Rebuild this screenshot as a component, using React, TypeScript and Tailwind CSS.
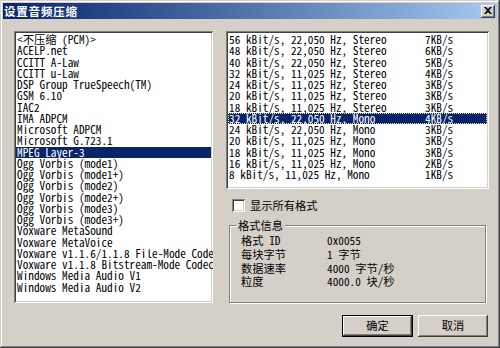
import React from "react";

const leftItems = [
  "<不压缩 (PCM)>",
  "ACELP.net",
  "CCITT A-Law",
  "CCITT u-Law",
  "DSP Group TrueSpeech(TM)",
  "GSM 6.10",
  "IAC2",
  "IMA ADPCM",
  "Microsoft ADPCM",
  "Microsoft G.723.1",
  "MPEG Layer-3",
  "Ogg Vorbis (mode1)",
  "Ogg Vorbis (mode1+)",
  "Ogg Vorbis (mode2)",
  "Ogg Vorbis (mode2+)",
  "Ogg Vorbis (mode3)",
  "Ogg Vorbis (mode3+)",
  "Voxware MetaSound",
  "Voxware MetaVoice",
  "Voxware v1.1.6/1.1.8 File-Mode Codec",
  "Voxware v1.1.8 Bitstream-Mode Codec",
  "Windows Media Audio V1",
  "Windows Media Audio V2",
];

const rightItems: [string, string][] = [
  ["56 kBit/s, 22,050 Hz, Stereo", "7KB/s"],
  ["48 kBit/s, 22,050 Hz, Stereo", "6KB/s"],
  ["40 kBit/s, 22,050 Hz, Stereo", "5KB/s"],
  ["32 kBit/s, 11,025 Hz, Stereo", "4KB/s"],
  ["24 kBit/s, 11,025 Hz, Stereo", "3KB/s"],
  ["20 kBit/s, 11,025 Hz, Stereo", "3KB/s"],
  ["18 kBit/s, 11,025 Hz, Stereo", "3KB/s"],
  ["32 kBit/s, 22,050 Hz, Mono", "4KB/s"],
  ["24 kBit/s, 22,050 Hz, Mono", "3KB/s"],
  ["20 kBit/s, 11,025 Hz, Mono", "3KB/s"],
  ["18 kBit/s, 11,025 Hz, Mono", "3KB/s"],
  ["16 kBit/s, 11,025 Hz, Mono", "2KB/s"],
  ["8 kBit/s, 11,025 Hz, Mono", "1KB/s"],
];

const info: [string, string][] = [
  ["格式 ID", "0x0055"],
  ["每块字节", "1 字节"],
  ["数据速率", "4000 字节/秒"],
  ["粒度", "4000.0 块/秒"],
];

export default function App() {
  return (
    <div className="w-[500px] h-[348px] bg-[#d4d0c8] p-[3px] flex flex-col text-black text-[11.25px] leading-[11.25px] font-['Noto_Sans_Mono_CJK_SC','Liberation_Mono','Noto_Sans_CJK_SC',monospace] shadow-[inset_-1px_-1px_0_#404040,inset_1px_1px_0_#d4d0c8,inset_-2px_-2px_0_#808080,inset_2px_2px_0_#ffffff] overflow-hidden">
      {/* Title bar */}
      <div className="h-[16px] flex items-center justify-between bg-gradient-to-r from-[#0a246a] to-[#a6caf0] pl-[1px] pr-[2px]">
        <span className="text-white font-bold text-[11.5px] leading-[16px] tracking-[0.8px] font-['Noto_Sans_CJK_SC',sans-serif]">
          设置音频压缩
        </span>
        <div className="w-[14px] h-[13px] bg-[#d4d0c8] flex items-center justify-center shadow-[inset_-1px_-1px_0_#404040,inset_1px_1px_0_#ffffff,inset_-2px_-2px_0_#808080,inset_2px_2px_0_#d4d0c8]">
          <svg width="8" height="7" viewBox="0 0 8 7" className="mb-[1px]">
            <path d="M0 0h2l2 2 2-2h2L5 3.5 8 7H6L4 5 2 7H0l3-3.5z" fill="#000" />
          </svg>
        </div>
      </div>

      {/* Body */}
      <div className="flex flex-col flex-1 pl-[11px] pr-[8px]">
        <div className="flex mt-[12px] gap-[13px]">
          {/* Left list */}
          <div className="w-[199px] h-[272px] bg-white p-[2px] overflow-hidden shadow-[inset_1px_1px_0_#808080,inset_-1px_-1px_0_#ffffff,inset_2px_2px_0_#404040,inset_-2px_-2px_0_#d4d0c8]">
            <div className="pt-[1px]">
              {leftItems.map((t, i) => (
                <div
                  key={i}
                  className={
                    "h-[11.25px] pl-[1px] whitespace-nowrap " +
                    (i === 10 ? "bg-[#0a246a] text-white" : "")
                  }
                >
                  {t}
                </div>
              ))}
            </div>
          </div>

          {/* Right column */}
          <div className="w-[263px] flex flex-col">
            <div className="h-[158px] bg-white p-[2px] overflow-hidden shadow-[inset_1px_1px_0_#808080,inset_-1px_-1px_0_#ffffff,inset_2px_2px_0_#404040,inset_-2px_-2px_0_#d4d0c8]">
              <div className="pt-[1px]">
                {rightItems.map(([a, b], i) => (
                  <div
                    key={i}
                    className={
                      "h-[11.25px] pl-[1px] flex whitespace-nowrap " +
                      (i === 7
                        ? "bg-[#0a246a] text-white outline-1 outline-dotted outline-offset-[-1px] outline-[#f0e0a0]"
                        : "")
                    }
                  >
                    <span className="w-[196px] shrink-0">{a}</span>
                    <span>{b}</span>
                  </div>
                ))}
              </div>
            </div>

            {/* checkbox */}
            <div className="mt-[10px] h-[13px] flex items-center pl-[6px]">
              <div className="w-[13px] h-[13px] bg-white shadow-[inset_1px_1px_0_#808080,inset_-1px_-1px_0_#ffffff,inset_2px_2px_0_#404040,inset_-2px_-2px_0_#d4d0c8]" />
              <span className="ml-[5px] leading-[13px]">显示所有格式</span>
            </div>

            {/* group box */}
            <div className="relative mt-[13px] mx-[3px] h-[78px] border border-[#808080] shadow-[1px_1px_0_#ffffff,inset_1px_1px_0_#ffffff]">
              <span className="absolute -top-[7px] left-[6px] px-[2px] bg-[#d4d0c8] leading-[13px]">
                格式信息
              </span>
              <div className="pt-[8px] pl-[11px]">
                {info.map(([k, v], i) => (
                  <div key={i} className="flex h-[13.7px] items-center">
                    <span className="w-[86px] shrink-0">{k}</span>
                    <span>{v}</span>
                  </div>
                ))}
              </div>
            </div>
          </div>
        </div>

        {/* Buttons */}
        <div className="flex justify-end gap-[5px] mt-[12px] pr-[1px]">
          <div className="w-[71px] h-[22px] border border-black">
            <div className="w-full h-full flex items-center justify-center shadow-[inset_-1px_-1px_0_#404040,inset_1px_1px_0_#ffffff,inset_-2px_-2px_0_#808080,inset_2px_2px_0_#d4d0c8]">
              确定
            </div>
          </div>
          <div className="w-[70px] h-[22px] flex items-center justify-center shadow-[inset_-1px_-1px_0_#404040,inset_1px_1px_0_#ffffff,inset_-2px_-2px_0_#808080,inset_2px_2px_0_#d4d0c8]">
            取消
          </div>
        </div>
      </div>
    </div>
  );
}
